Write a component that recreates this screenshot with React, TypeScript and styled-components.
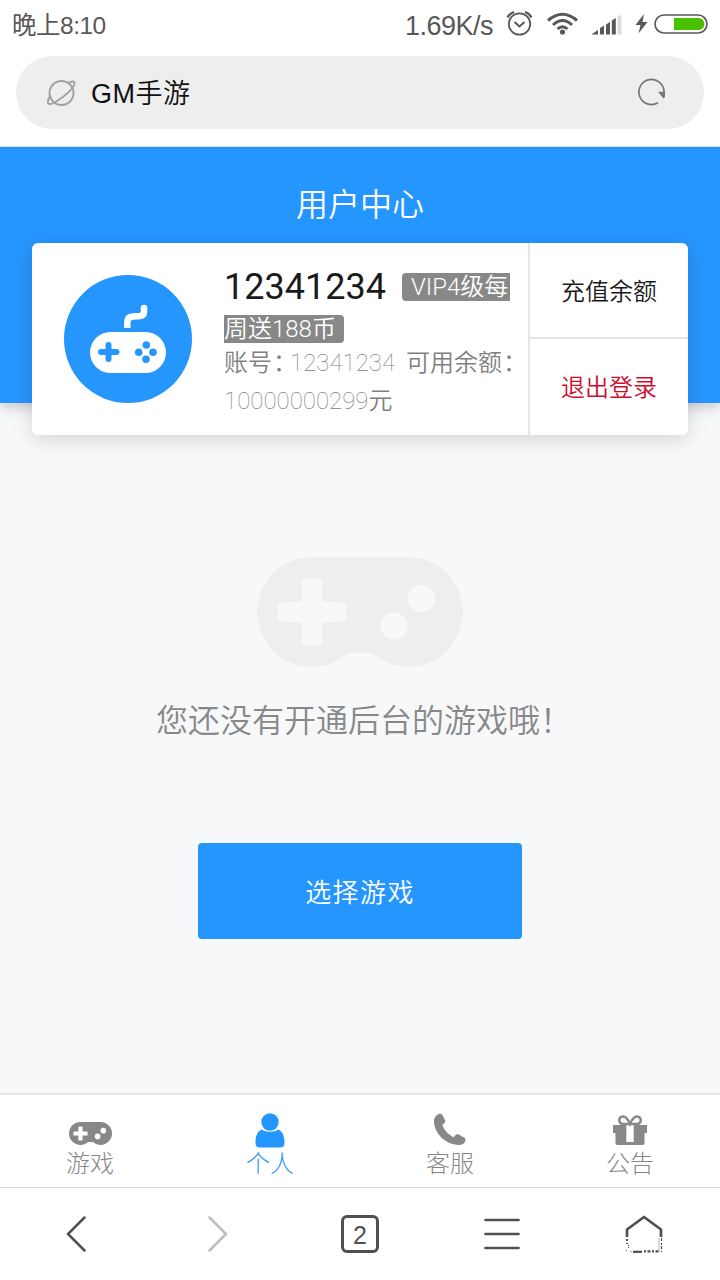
import React from "react";
import styled, { createGlobalStyle } from "styled-components";

const Global = createGlobalStyle`
  * { box-sizing: border-box; }
  body { margin: 0; background: #fff; font-family: Roboto, "Noto Sans CJK SC", sans-serif; }
  svg { display: block; flex: none; }
`;

const Screen = styled.div`
  width: 720px;
  height: 1280px;
  display: flex;
  flex-direction: column;
  overflow: hidden;
  background: #fff;
`;

const StatusBar = styled.div`
  height: 56px;
  padding: 0 12px 6px;
  display: flex;
  align-items: center;
  justify-content: space-between;
  color: #585858;
`;
const Clock = styled.span`
  font-family: "Liberation Sans", "Noto Sans CJK SC", sans-serif;
  font-size: 24.5px;
  line-height: 40px;
  letter-spacing: -0.5px;
  padding-top: 1px;
`;
const Speed = styled(Clock)`
  font-size: 27px;
  letter-spacing: -0.5px;
  margin-right: 11px;
`;
const StatusRight = styled.div`
  display: flex;
  align-items: center;
`;

const AddressBar = styled.div`
  height: 73px;
  margin: 0 16px 17px;
  padding: 0 38px 0 30px;
  border-radius: 37px;
  background: #eee;
  display: flex;
  align-items: center;
`;
const SiteName = styled.span`
  flex: 1;
  margin-left: 15px;
  padding-top: 3px;
  font-family: "Liberation Sans", "Noto Sans CJK SC", sans-serif;
  font-size: 27px;
  line-height: 40px;
  letter-spacing: 0.5px;
  font-weight: 350;
  color: #111;
`;

const Page = styled.main`
  flex: 1;
  display: flex;
  flex-direction: column;
  align-items: center;
  overflow: hidden;
  background: #f7f8fa;
`;
const Hero = styled.header`
  width: 100%;
  height: 257px;
  padding-top: 34px;
  background: #2696ff;
  box-shadow: 0 4px 12px rgba(0, 0, 0, 0.2);
  border-top: 1px solid #dcdcdc;
  text-align: center;
  color: #fff;
  font-size: 32px;
  line-height: 48px;
  font-weight: 350;
`;

const CardShadow = styled.div`
  position: relative;
  margin-top: -160px;
  border-radius: 6px;
  box-shadow: 0 4px 20px rgba(0, 0, 0, 0.15);
`;
const Card = styled.section`
  width: 656px;
  height: 192px;
  display: flex;
  border-radius: 6px;
  overflow: hidden;
  background: #fff;
`;
const Avatar = styled.div`
  width: 128px;
  height: 128px;
  margin: 32px;
  border-radius: 50%;
  background: #2696ff;
  flex: none;
`;
const Profile = styled.div`
  width: 304px;
  padding-top: 23px;
  flex: none;
  white-space: nowrap;
`;
const NameLine = styled.div`
  height: 42px;
  display: flex;
  align-items: center;
`;
const UserName = styled.span`
  width: 178px;
  font-size: 36px;
  line-height: 42px;
  color: #1a1a1a;
`;
const Badge = styled.span<{ $part: "start" | "end" }>`
  height: 28px;
  width: ${p => (p.$part === "start" ? 108 : 120)}px;
  padding-left: ${p => (p.$part === "start" ? 9 : 0)}px;
  border-radius: ${p => (p.$part === "start" ? "4px 0 0 4px" : "0 4px 4px 0")};
  background: #888;
  color: #fff;
  font-size: 24px;
  line-height: 28px;
  font-weight: 350;
`;
const Details = styled.div`
  margin-top: -6px;
`;
const Detail = styled.div`
  height: 38px;
  line-height: 38px;
  font-size: 24px;
  font-weight: 350;
  color: #808080;
  display: flex;
`;
const Colon = styled.span`
  width: 18px;
  padding-left: 1px;
  font-feature-settings: "halt";
`;
const Digits = styled.span<{ $gap?: number }>`
  font-weight: 100;
  margin-right: ${p => p.$gap || 0}px;
`;
const Actions = styled.div`
  flex: 1;
  display: flex;
  flex-direction: column;
  border-left: 2px solid #e5e5e5;
`;
const Action = styled.button<{ $danger?: boolean }>`
  height: 96px;
  border: 0;
  padding: ${p => (p.$danger ? 2 : 3)}px 0 0;
  border-bottom: ${p => (p.$danger ? "0" : "2px solid #e5e5e5")};
  background: none;
  font: 350 24px/36px Roboto, "Noto Sans CJK SC", sans-serif;
  color: ${p => (p.$danger ? "#cf0a2c" : "#1a1a1a")};
`;

const EmptyIcon = styled.div`
  margin-top: 122px;
`;
const EmptyText = styled.p`
  margin: 30px 0 0;
  width: 408px;
  white-space: nowrap;
  font-size: 32px;
  line-height: 48px;
  font-weight: 350;
  color: #888;
`;
const Primary = styled.button`
  width: 324px;
  height: 96px;
  margin-top: 98px;
  padding: 3px 0 0;
  border: 0;
  border-radius: 4px;
  background: #2696ff;
  color: #fff;
  font: 350 26px/40px Roboto, "Noto Sans CJK SC", sans-serif;
  letter-spacing: 1.4px;
`;

const Tabs = styled.nav`
  height: 94px;
  border-top: 2px solid #e4e5e7;
  display: flex;
`;
const Tab = styled.div<{ $active?: boolean }>`
  flex: 1;
  display: flex;
  flex-direction: column;
  align-items: center;
  color: ${p => (p.$active ? "#2696ff" : "#888")};
  font-size: 24px;
  line-height: 32px;
  font-weight: 300;
`;
const TabIcon = styled.div<{ $lift: number }>`
  height: 53px;
  padding-bottom: ${p => p.$lift}px;
  display: flex;
  align-items: flex-end;
`;

const BrowserBar = styled.nav`
  height: 93px;
  padding: 0 5px 1px;
  border-top: 1px solid #d9d9d9;
  display: grid;
  grid-template-columns: repeat(5, 1fr);
  align-items: center;
  justify-items: center;
`;
const PageCount = styled.div`
  width: 38px;
  height: 38px;
  border: 3px solid #505050;
  border-radius: 6px;
  font: 25px/34px "Liberation Sans", sans-serif;
  color: #505050;
  text-align: center;
`;

const Gamepad = ({ width, color, hole }: { width: number; color: string; hole: string }) => (
  <svg width={width} height={(width * 110) / 206} viewBox="0 0 206 110">
    <path fill={color} d="M55 0H151A55 55 0 0 1 151 110C139 110 126 105 115 96H91C80 105 68 110 55 110A55 55 0 0 1 55 0Z" />
    <rect x="45" y="21" width="20" height="68" rx="3" fill={hole} />
    <rect x="21" y="45" width="68" height="20" rx="3" fill={hole} />
    <circle cx="164.500" cy="41.500" r="13.500" fill={hole} />
    <circle cx="137" cy="69" r="13.500" fill={hole} />
  </svg>
);

const AvatarArt = () => (
  <svg width="128" height="128" viewBox="0 0 128 128">
    <rect x="26" y="57" width="76" height="41" rx="20.500" fill="#fff" />
    <path d="M63.300 53V47Q63.300 42 69 41.500L76 41Q80 40.500 80 37V33" fill="none" stroke="#fff" strokeWidth="6.500" />
    <circle cx="80" cy="33" r="3.250" fill="#fff" />
    <path d="M44.500 70V84M37 77H52.500" stroke="#2696ff" strokeWidth="6" strokeLinecap="round" />
    <g fill="#2696ff">
      <circle cx="82.300" cy="70" r="3.800" /><circle cx="74.700" cy="77.200" r="3.800" />
      <circle cx="89" cy="77.200" r="3.800" /><circle cx="82" cy="84.200" r="3.800" />
    </g>
  </svg>
);

const StatusIcons = () => (
  <svg width="204" height="40" viewBox="504 5 204 40">
    <g fill="none" stroke="#585858" strokeWidth="1.800">
      <circle cx="519.500" cy="24" r="10.700" />
      <path d="M514.500 22L519.500 26.500L524.500 22" strokeWidth="2" />
      <path d="M507.500 17.500Q509.500 13.500 514 12M531.500 17.500Q529.500 13.500 525 12" strokeWidth="2.200" />
    </g>
    <g fill="none" stroke="#585858" strokeWidth="3">
      <path d="M548 20.500Q562.500 8 577 20.500" />
      <path d="M553 25Q562.500 16 572 25" />
      <path d="M557.500 29Q562.500 24.500 567.500 29" />
    </g>
    <circle cx="562.500" cy="32" r="2.600" fill="#585858" />
    <g fill="#585858">
      <path d="M591.500 34.500L598 30V34.500Z" />
      <path d="M600 28L604 25.500V34.500H600Z" /><path d="M606 24.500L610 22V34.500H606Z" />
      <path d="M611.800 20.500L615.800 18V34.500H611.800Z" />
      <path d="M617.500 17L621.500 14.500V34.500H617.500Z" fill="#ddd" />
      <path d="M644 14L635.500 25H640.500L638.500 33.500L647.500 22H642.500Z" />
    </g>
    <rect x="655" y="15" width="52" height="18" rx="9" fill="#fff" stroke="#585858" strokeWidth="1.700" />
    <path d="M674 18H698.500A6 6 0 0 1 698.500 30H674Z" fill="#49c100" />
  </svg>
);

const Planet = () => (
  <svg width="30" height="30" viewBox="0 0 30 30" fill="none" stroke="#a0a0a0" strokeWidth="1.900">
    <circle cx="15.500" cy="15" r="12" />
    <path d="M22 5C26 3 29 3 28.500 5.500C28 10 19 18 11 23C5 27 1 27 2 23C2 21 3.500 19 5 17.500" />
  </svg>
);

const Reload = () => (
  <svg width="30" height="32" viewBox="0 0 30 32">
    <path d="M22 25.800A12.600 12.600 0 1 1 28.100 15" fill="none" stroke="#777" strokeWidth="1.700" />
    <path d="M22 14.800H29V20L27.500 21.500Z" fill="#777" />
  </svg>
);

const Person = () => (
  <svg width="30" height="35" viewBox="0 0 30 35" fill="currentColor">
    <circle cx="15" cy="9" r="8.700" />
    <path d="M7 16.500C10 19.500 20 19.500 23 16.500C28 18 29.500 24 29.500 30Q29.500 34.500 25 34.500H5Q.5 34.500 .5 30C.5 24 2 18 7 16.500Z" />
  </svg>
);

const Phone = () => (
  <svg width="34" height="34" viewBox="0 0 34 34" fill="currentColor">
    <path d="M7 .7Q8.500 .5 9.300 2L12.500 8Q12.700 9 9.300 12C11 17 16 22 20.500 24.200Q23.500 20.800 24.800 21L31.500 24.800Q32.800 25.500 32.500 27.500C31.500 31 28.500 32 26 32C12 31.500 1 20 1 8C1 4 4 1 7 .7Z" />
  </svg>
);

const Gift = () => (
  <svg width="36" height="34" viewBox="0 0 36 34">
    <path fill="currentColor" d="M1 12H35V20H32.500V30Q32.500 32 30.500 32H5.500Q3.500 32 3.500 30V20H1Z" />
    <path fill="#fff" d="M14.300 12H21.700V29H14.300Z" />
    <path d="M18 11C15 4 12 2.500 9 4C6 6 7 11 11 11H25C29 11 30 6 27 4C24 2.500 21 4 18 11Z" fill="none" stroke="currentColor" strokeWidth="2.500" />
  </svg>
);

const Chevron = ({ forward }: { forward?: boolean }) => (
  <svg width="20" height="36" viewBox="0 0 20 36">
    <path d={forward ? "M1.500 1.500L18 18L1.500 34.500" : "M18.500 1.500L2 18L18.500 34.500"} fill="none" stroke={forward ? "#bdbdbd" : "#505050"} strokeWidth="2.500" strokeLinecap="round" />
  </svg>
);

const Menu = () => (
  <svg width="36" height="32" viewBox="0 0 36 32">
    <path d="M1.500 2H34.500M1.500 16H34.500M1.500 30H34.500" stroke="#505050" strokeWidth="2.700" strokeLinecap="round" />
  </svg>
);

const Home = () => (
  <svg width="38" height="38" viewBox="0 0 38 38" fill="none" stroke="#505050">
    <path d="M2 22V14.500L19 2L36 14.500V22" strokeWidth="2.700" strokeLinejoin="round" />
    <path d="M2 24V29" strokeWidth="2" strokeDasharray="2 2 1 1" />
    <path d="M3.500 30V33M1.500 35V37M5 36L7 37.500" strokeWidth="1" strokeDasharray="1 1" />
    <path d="M34 23V37" strokeWidth=".7" stroke="#999" />
    <path d="M36.500 23V37" strokeWidth="1.200" strokeDasharray="3 2 2 1" />
    <path d="M8 36.800H17" strokeWidth="2.200" />
    <path d="M19 36.300H35" strokeWidth="2.200" strokeDasharray="2 1.500 3 1.500" />
  </svg>
);

export default function App() {
  return (
    <Screen>
      <Global />
      <StatusBar>
        <Clock>晚上8:10</Clock>
        <StatusRight><Speed>1.69K/s</Speed><StatusIcons /></StatusRight>
      </StatusBar>
      <AddressBar>
        <Planet />
        <SiteName>GM手游</SiteName>
        <Reload />
      </AddressBar>
      <Page>
        <Hero>用户中心</Hero>
        <CardShadow>
          <Card>
            <Avatar><AvatarArt /></Avatar>
            <Profile>
              <NameLine>
                <UserName>12341234</UserName>
                <Badge $part="start">VIP4级每</Badge>
              </NameLine>
              <NameLine>
                <Badge $part="end">周送188币</Badge>
              </NameLine>
              <Details>
                <Detail>账号<Colon>：</Colon><Digits $gap={11}>12341234</Digits>可用余额<Colon>：</Colon></Detail>
                <Detail><Digits>10000000299</Digits>元</Detail>
              </Details>
            </Profile>
            <Actions>
              <Action>充值余额</Action>
              <Action $danger>退出登录</Action>
            </Actions>
          </Card>
        </CardShadow>
        <EmptyIcon><Gamepad width={206} color="#edefef" hole="#f7f8fa" /></EmptyIcon>
        <EmptyText>您还没有开通后台的游戏哦！</EmptyText>
        <Primary>选择游戏</Primary>
      </Page>
      <Tabs>
        <Tab><TabIcon $lift={3}><Gamepad width={43} color="#888" hole="#fff" /></TabIcon>游戏</Tab>
        <Tab $active><TabIcon $lift={0}><Person /></TabIcon>个人</Tab>
        <Tab><TabIcon $lift={1}><Phone /></TabIcon>客服</Tab>
        <Tab><TabIcon $lift={1}><Gift /></TabIcon>公告</Tab>
      </Tabs>
      <BrowserBar>
        <Chevron />
        <Chevron forward />
        <PageCount>2</PageCount>
        <Menu />
        <Home />
      </BrowserBar>
    </Screen>
  );
}
